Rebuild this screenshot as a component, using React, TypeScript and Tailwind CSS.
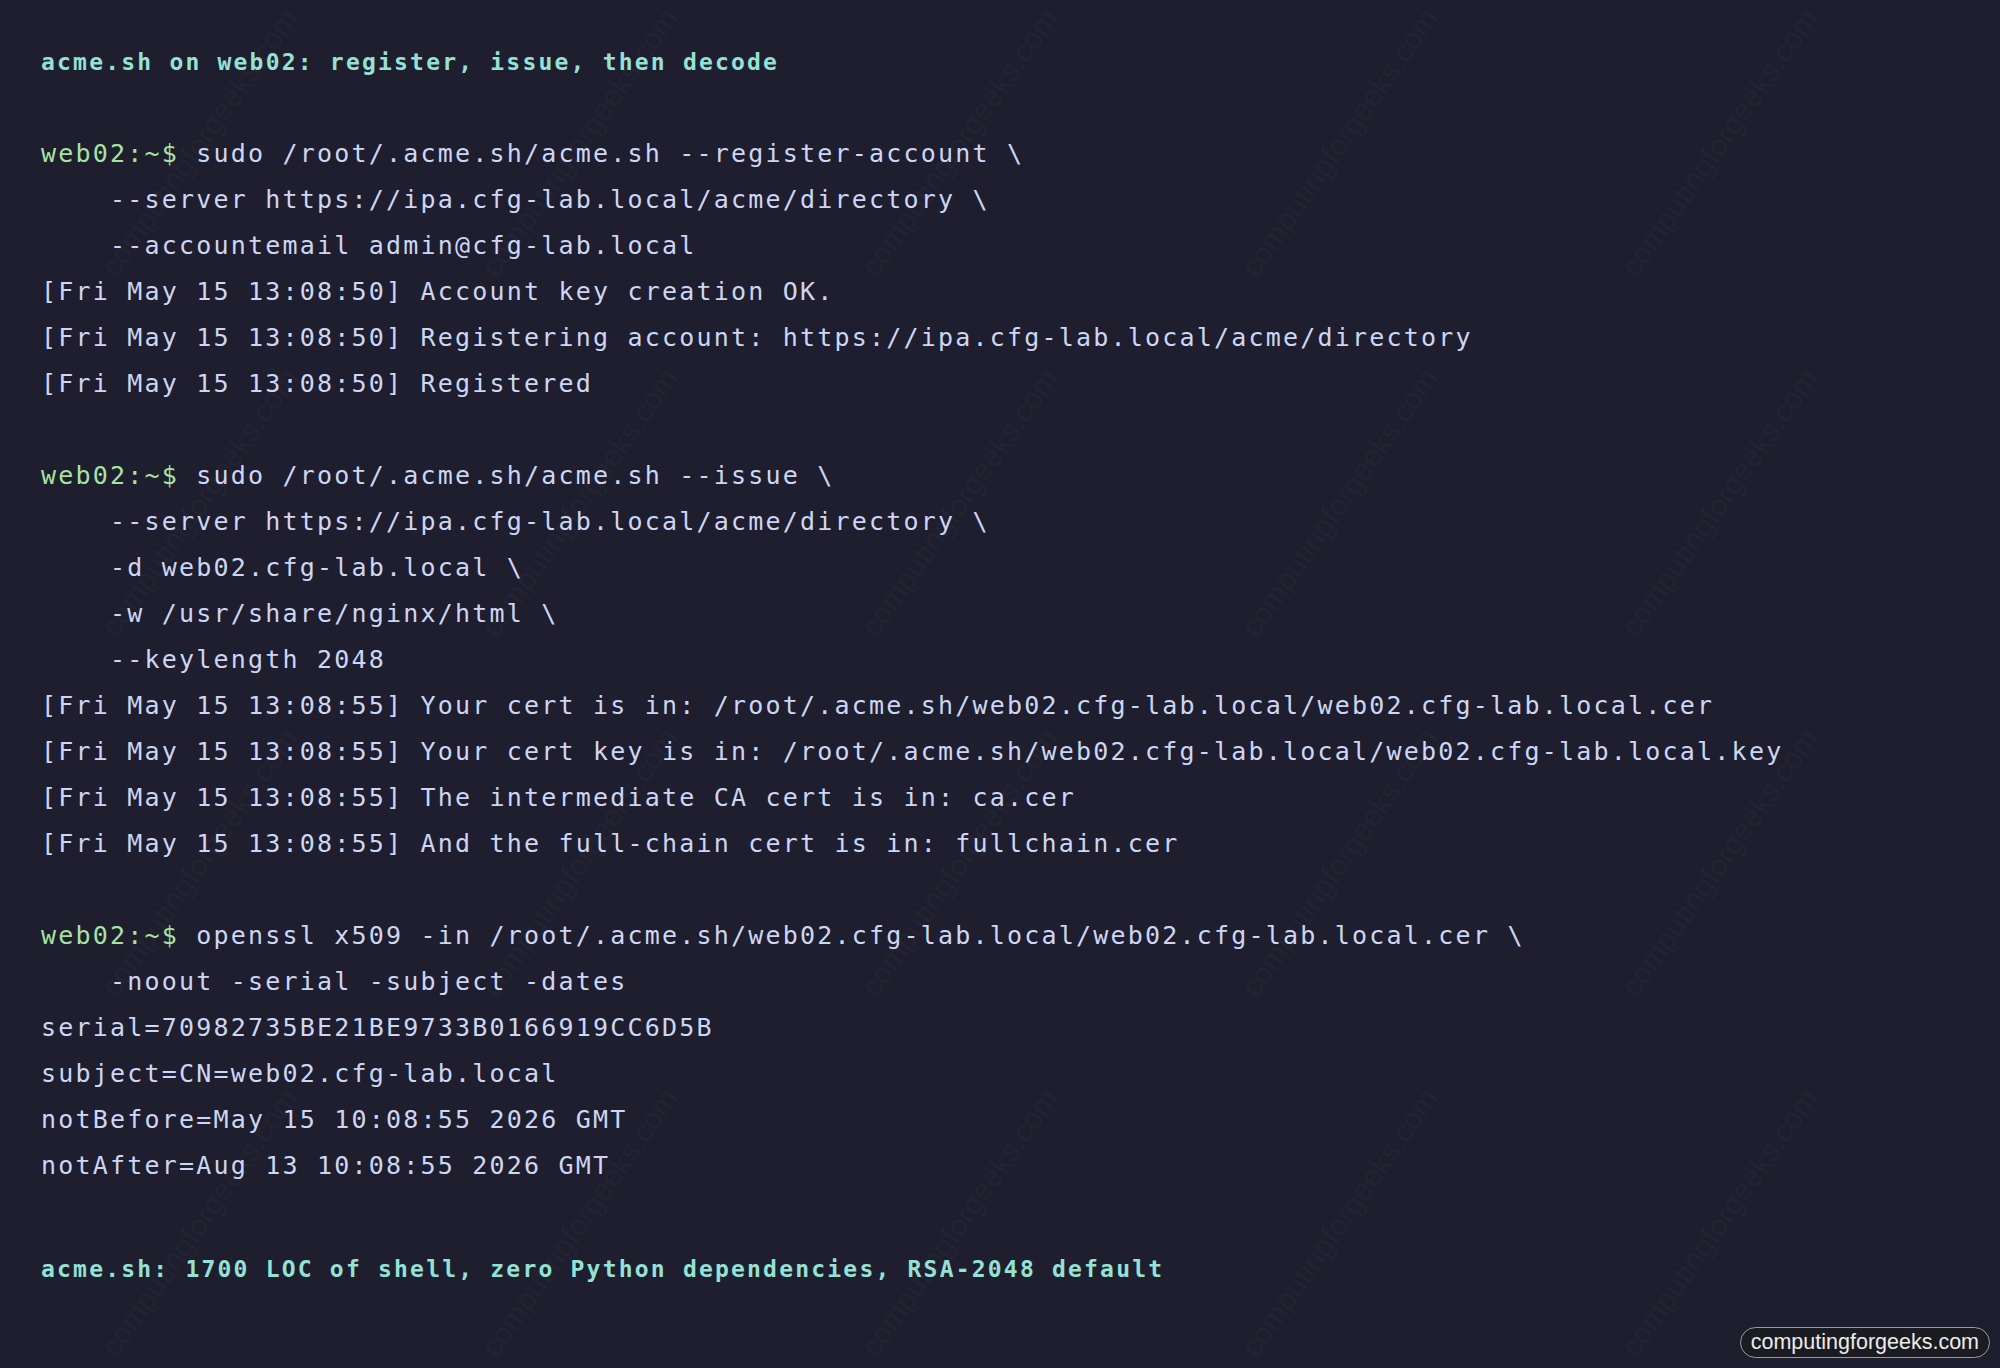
type Line = { kind: 'title' | 'prompt' | 'cont' | 'out' | 'blank'; text?: string }

const lines: Line[] = [
  { kind: 'title', text: 'acme.sh on web02: register, issue, then decode' },
  { kind: 'blank' },
  { kind: 'prompt', text: 'sudo /root/.acme.sh/acme.sh --register-account \\' },
  { kind: 'cont', text: '--server https://ipa.cfg-lab.local/acme/directory \\' },
  { kind: 'cont', text: '--accountemail admin@cfg-lab.local' },
  { kind: 'out', text: '[Fri May 15 13:08:50] Account key creation OK.' },
  { kind: 'out', text: '[Fri May 15 13:08:50] Registering account: https://ipa.cfg-lab.local/acme/directory' },
  { kind: 'out', text: '[Fri May 15 13:08:50] Registered' },
  { kind: 'blank' },
  { kind: 'prompt', text: 'sudo /root/.acme.sh/acme.sh --issue \\' },
  { kind: 'cont', text: '--server https://ipa.cfg-lab.local/acme/directory \\' },
  { kind: 'cont', text: '-d web02.cfg-lab.local \\' },
  { kind: 'cont', text: '-w /usr/share/nginx/html \\' },
  { kind: 'cont', text: '--keylength 2048' },
  { kind: 'out', text: '[Fri May 15 13:08:55] Your cert is in: /root/.acme.sh/web02.cfg-lab.local/web02.cfg-lab.local.cer' },
  { kind: 'out', text: '[Fri May 15 13:08:55] Your cert key is in: /root/.acme.sh/web02.cfg-lab.local/web02.cfg-lab.local.key' },
  { kind: 'out', text: '[Fri May 15 13:08:55] The intermediate CA cert is in: ca.cer' },
  { kind: 'out', text: '[Fri May 15 13:08:55] And the full-chain cert is in: fullchain.cer' },
  { kind: 'blank' },
  { kind: 'prompt', text: 'openssl x509 -in /root/.acme.sh/web02.cfg-lab.local/web02.cfg-lab.local.cer \\' },
  { kind: 'cont', text: '-noout -serial -subject -dates' },
  { kind: 'out', text: 'serial=70982735BE21BE9733B0166919CC6D5B' },
  { kind: 'out', text: 'subject=CN=web02.cfg-lab.local' },
  { kind: 'out', text: 'notBefore=May 15 10:08:55 2026 GMT' },
  { kind: 'out', text: 'notAfter=Aug 13 10:08:55 2026 GMT' },
  { kind: 'blank' },
]

// faint diagonal watermark tiles
const marks: { x: number; y: number }[] = []
for (let r = 0; r < 4; r++) {
  for (let c = 0; c < 6; c++) {
    marks.push({ x: 40 + c * 380, y: 120 + r * 360 })
  }
}

export default function App() {
  return (
    <div className="relative h-[1368px] w-full overflow-hidden bg-[#1e1e2e]">
      {marks.map((m, i) => (
        <div
          key={i}
          aria-hidden
          className="pointer-events-none absolute -rotate-[55deg] whitespace-nowrap text-[30px] text-[#ffffff] opacity-[0.02] [font-family:'Liberation_Sans',Arial,sans-serif]"
          style={{ left: m.x, top: m.y }}
        >
          computingforgeeks.com
        </div>
      ))}

      <div className="relative px-[41px] pt-[39px] text-[25px] leading-[46px] tracking-[2.2px] text-[#cdd6f4] [font-family:'DejaVu_Sans_Mono','Liberation_Mono',monospace]">
        {lines.map((l, i) => {
          if (l.kind === 'blank') return <div key={i} className="h-[46px]" />
          if (l.kind === 'title')
            return (
              <div key={i} className="whitespace-pre text-[23px] font-bold text-[#94e2d5]">
                {l.text}
              </div>
            )
          if (l.kind === 'prompt')
            return (
              <div key={i} className="whitespace-pre">
                <span className="text-[#a6e3a1]">web02:~$</span> {l.text}
              </div>
            )
          if (l.kind === 'cont')
            return (
              <div key={i} className="whitespace-pre">
                {'    ' + l.text}
              </div>
            )
          return (
            <div key={i} className="whitespace-pre">
              {l.text}
            </div>
          )
        })}
        <div className="mt-[11px] whitespace-pre text-[23px] font-bold text-[#94e2d5]">
          acme.sh: 1700 LOC of shell, zero Python dependencies, RSA-2048 default
        </div>
      </div>

      <div className="absolute bottom-[10px] right-[10px] rounded-full border border-[#9a9aa0] bg-[#1b1b22] px-[10px] py-[1px] text-[21.5px] leading-[27px] text-[#ececec] [font-family:'Liberation_Sans',Arial,sans-serif]">
        computingforgeeks.com
      </div>
    </div>
  )
}
